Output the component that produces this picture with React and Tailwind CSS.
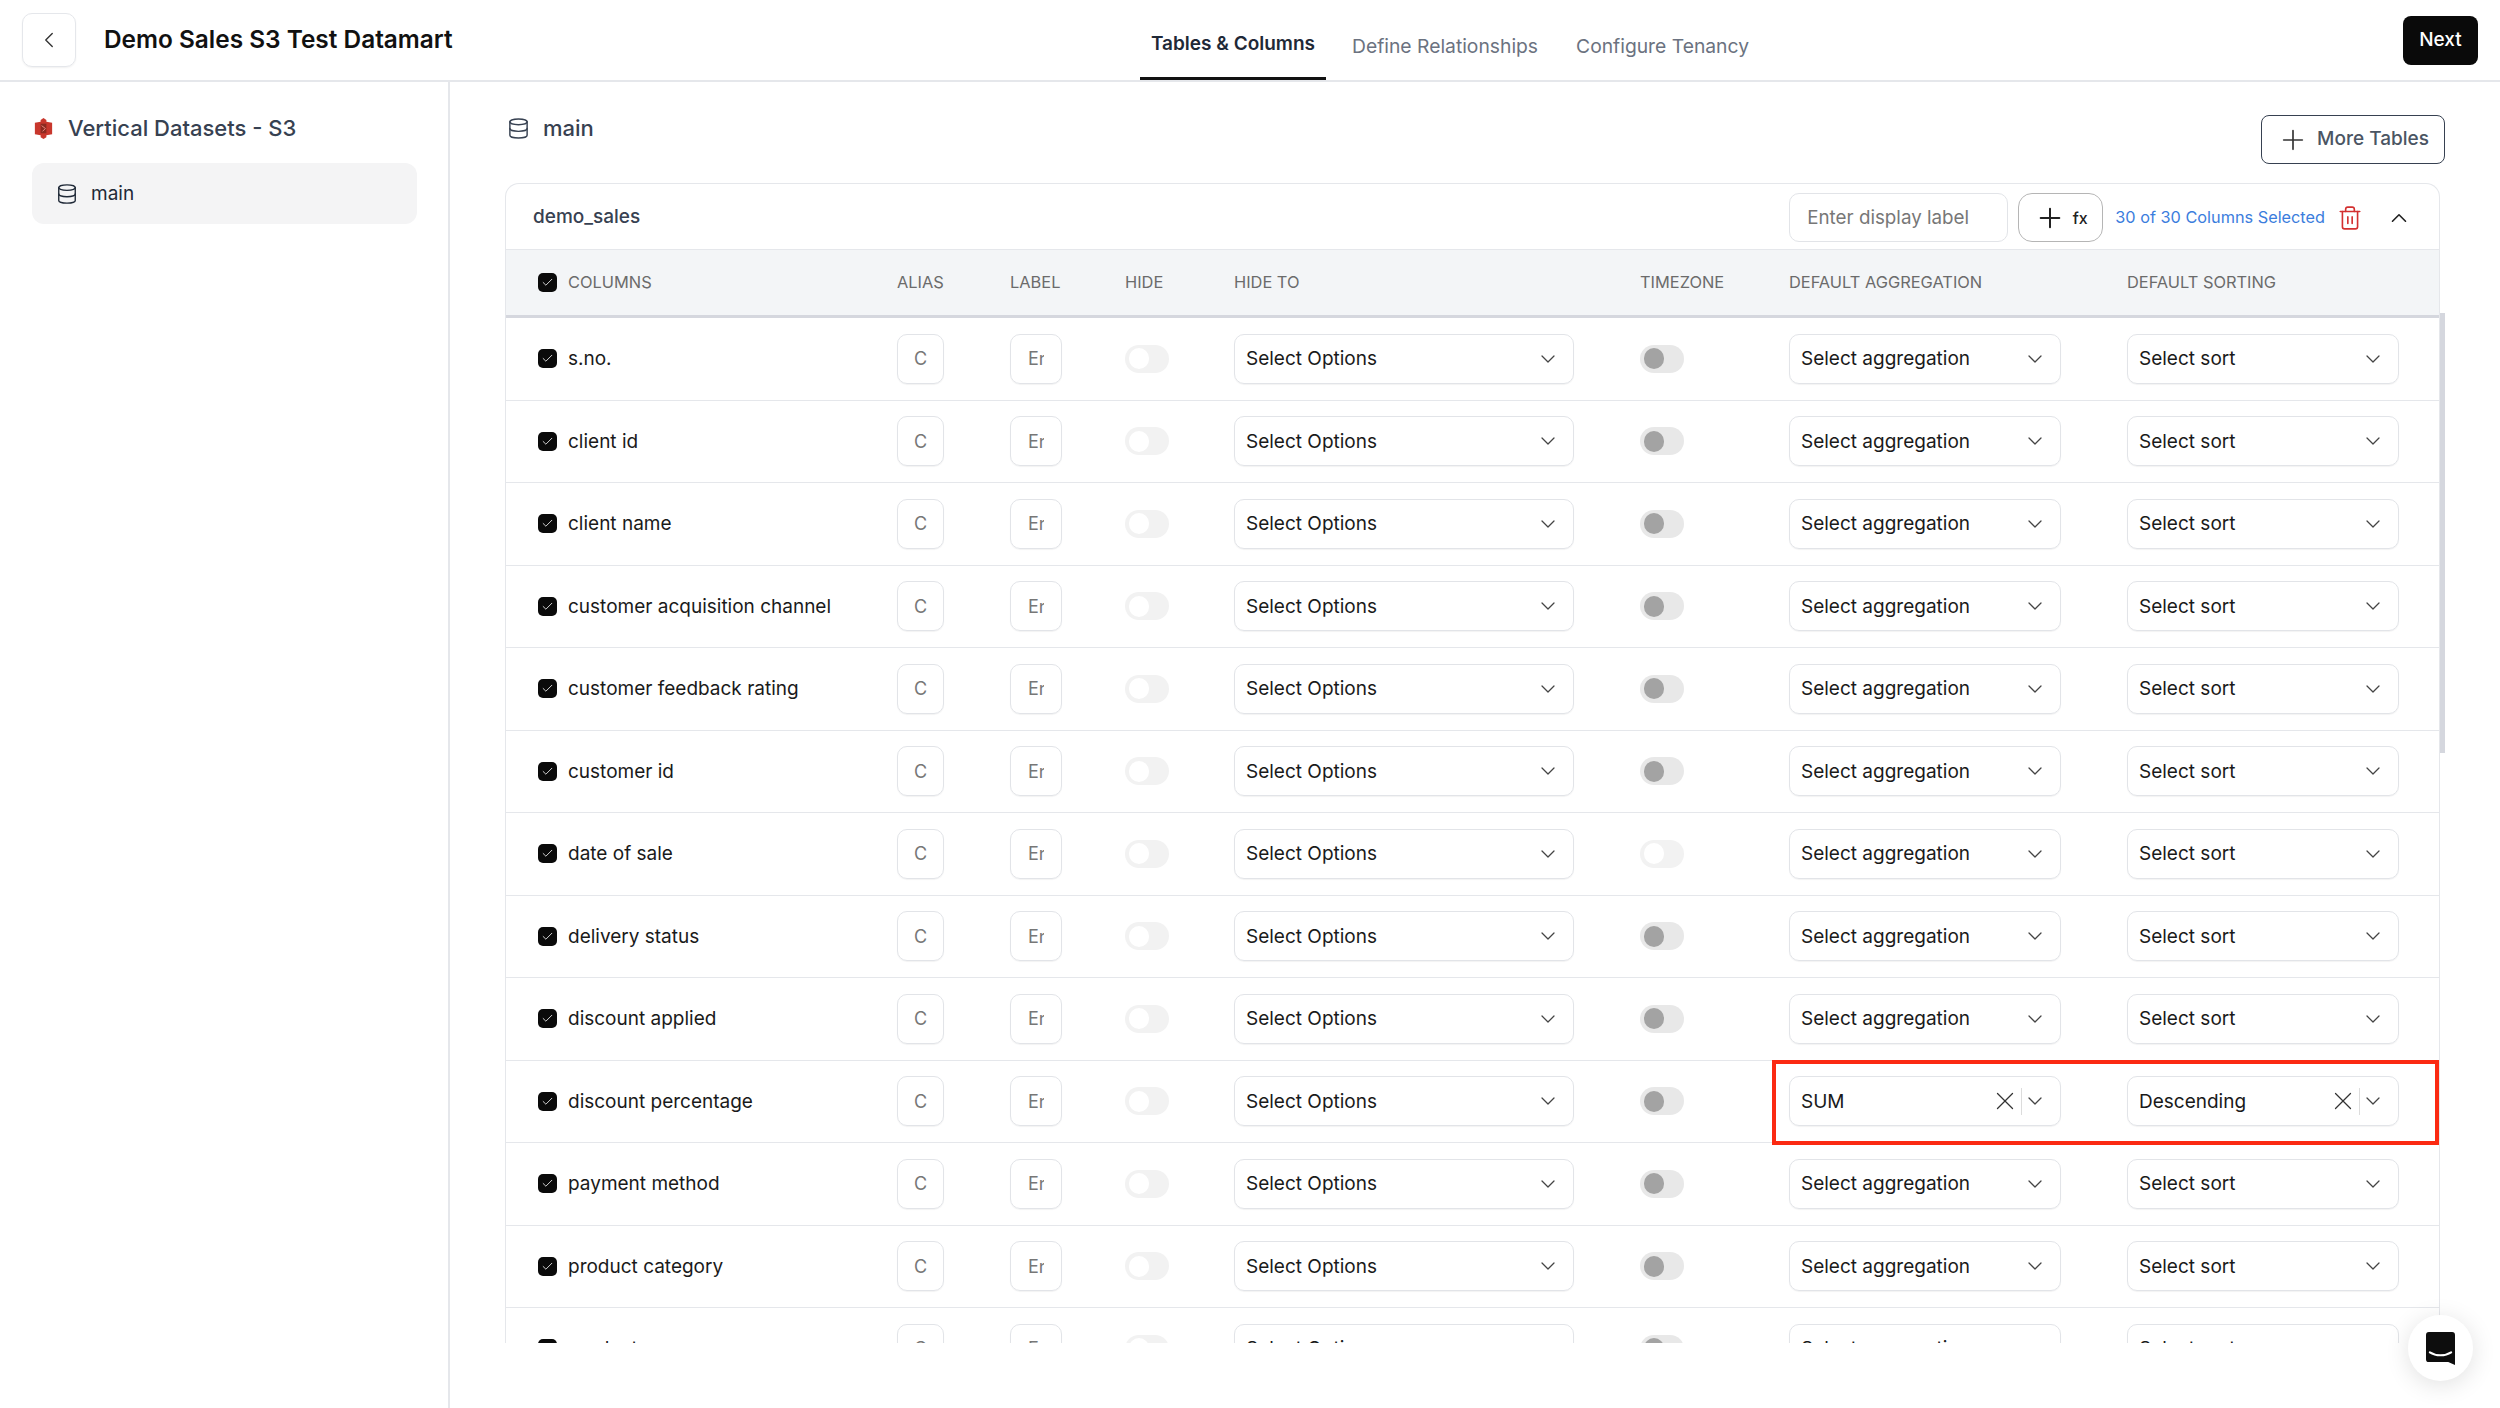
import { ChevronLeft, ChevronDown, ChevronUp, Database, Plus, Trash2, X, Check } from 'lucide-react'

const columns = [
  's.no.', 'client id', 'client name', 'customer acquisition channel', 'customer feedback rating',
  'customer id', 'date of sale', 'delivery status', 'discount applied', 'discount percentage',
  'payment method', 'product category', 'product',
]

const gridCols = 'grid grid-cols-[359px_113px_115px_109px_406px_149px_338px_1fr] pl-[32px]'

function Tick() {
  return (
    <span className="w-[19px] h-[19px] rounded-[5px] bg-[#0a0a0a] flex items-center justify-center flex-shrink-0">
      <Check className="w-[13px] h-[13px] text-white" strokeWidth={1.5} />
    </span>
  )
}

function Toggle({ grey }) {
  return (
    <span className={`w-[44px] h-[28px] rounded-full flex items-center pl-[4px] ${grey ? 'bg-[#e8e8e8]' : 'bg-[#f2f2f2]'}`}>
      <span className={`w-[20px] h-[21px] rounded-full ${grey ? 'bg-[#a3a3a3]' : 'bg-white'}`} />
    </span>
  )
}

function Picker({ text, clearable, className }) {
  return (
    <div className={`h-[50px] rounded-[10px] border border-[#e2e4e8] shadow-[0_1px_1px_rgba(0,0,0,0.05)] flex items-center pl-[11px] pr-[13px] text-[19px] text-[#1a1a1a] ${className}`}>
      <span className="flex-1 pt-[1px]">{text}</span>
      {clearable && <X className="w-[30px] h-[30px] text-[#333] mr-[1px]" strokeWidth={1} />}
      {clearable && <span className="w-px h-[27px] bg-[#dcdcdc] mr-[1px]" />}
      <ChevronDown className="w-[24px] h-[24px] text-[#444]" strokeWidth={1.25} />
    </div>
  )
}

function Row({ name, sum }) {
  return (
    <div className={`${gridCols} relative h-[82.5px] items-center border-b border-[#e5e7eb]`}>
      <div className="flex items-center gap-[11px] text-[19px] text-[#1a1a1a]">
        <Tick />
        <span className="pt-[1px]">{name}</span>
      </div>
      <input placeholder="C" className="w-[47px] h-[50px] rounded-[10px] border border-[#e2e4e8] shadow-[0_1px_1px_rgba(0,0,0,0.05)] text-center text-[18px] placeholder:text-[#777] outline-none" />
      <input placeholder="Enter" className="w-[52px] h-[50px] rounded-[10px] border border-[#e2e4e8] shadow-[0_1px_1px_rgba(0,0,0,0.05)] px-[17px] text-[18px] placeholder:text-[#777] outline-none" />
      <Toggle />
      <Picker text="Select Options" className="w-[340px]" />
      <Toggle grey={name !== 'date of sale'} />
      <Picker text={sum ? 'SUM' : 'Select aggregation'} clearable={sum} className="w-[272px]" />
      <Picker text={sum ? 'Descending' : 'Select sort'} clearable={sum} className="w-[272px]" />
      {sum && <div className="absolute left-[1266px] right-0 top-[-1px] h-[85px] border-4 border-[#fb2a12]" />}
    </div>
  )
}

export default function App() {
  return (
    <div className="h-screen overflow-hidden bg-white flex flex-col font-['Inter',sans-serif]">
      {/* Header */}
      <header className="h-[82px] border-b-2 border-[#e5e7eb] flex-shrink-0 flex items-center pl-[22px] pr-[22px]">
        <div className="w-[420px] flex items-center gap-[28px]">
          <button className="w-[54px] h-[54px] flex-shrink-0 rounded-[10px] border border-[#e5e7eb] shadow-[0_1px_2px_rgba(0,0,0,0.06)] flex items-center justify-center text-[#333]">
            <ChevronLeft className="w-[26px] h-[26px]" strokeWidth={1.25} />
          </button>
          <h1 className="text-[24.4px] font-semibold text-[#111] whitespace-nowrap mt-[-2px]">Demo Sales S3 Test Datamart</h1>
        </div>
        <nav className="ml-[698px] flex items-stretch h-full">
          <a className="w-[186px] flex items-center justify-center pt-[11px] border-b-[3px] border-[#111] text-[19px] font-semibold text-[#1f2937]">Tables &amp; Columns</a>
          <a className="ml-[26px] flex items-center pt-[12px] text-[19.3px] text-[#6b7280]">Define Relationships</a>
          <a className="ml-[38px] flex items-center pt-[12px] text-[19.3px] text-[#6b7280]">Configure Tenancy</a>
        </nav>
        <button className="ml-auto w-[75px] h-[49px] rounded-[8px] bg-[#0a0a0a] text-white text-[19px] font-medium">Next</button>
      </header>

      {/* Body */}
      <div className="flex flex-1 overflow-hidden">
        <aside className="w-[450px] border-r-2 border-[#e5e7eb] flex-shrink-0 pl-[32px] pr-[31px] pt-[31px]">
          <div className="flex items-center gap-[13px] h-[30px] text-[22px] font-medium text-[#374151]">
            <svg className="w-[23px] h-[23px] flex-shrink-0" viewBox="0 0 24 24">
              <path fill="#c8372d" d="M3 6l6-1V3l3-2 3 2v2l6 1v12l-6 1v2l-3 2-3-2v-2l-6-1z" />
              <path fill="#8c2a20" d="M9 7h6v10H9z" />
              <path fill="none" stroke="#e9897f" strokeWidth="1" d="M10 9l4 3-3 3" />
            </svg>
            Vertical Datasets - S3
          </div>
          <div className="mt-[20px] h-[61px] rounded-[12px] bg-[#f4f4f5] flex items-center gap-[13px] pl-[24px] text-[19px] text-[#1f2937]">
            <Database className="w-[22px] h-[22px]" strokeWidth={1.5} />
            <span className="pt-[2px]">main</span>
          </div>
        </aside>

        <main className="flex-1 pl-[55px] pr-[60px] relative">
          <div className="h-[101px] flex pt-[33px] justify-between">
            <div className="flex items-center gap-[13px] h-[26px] pl-[2px] text-[22px] font-medium text-[#374151]">
              <Database className="w-[23px] h-[23px]" strokeWidth={1.5} />
              main
            </div>
            <button className="mr-[-5px] w-[184px] h-[49px] rounded-[8px] border border-[#374151] flex items-center justify-center gap-[8px] text-[19px] font-medium text-[#4b5563]">
              <Plus className="w-[32px] h-[32px] text-[#333]" strokeWidth={1.25} />
              More Tables
            </button>
          </div>

          <div className="relative h-[1160px]">
            <div className="h-full rounded-t-[14px] border border-b-0 border-[#e5e7eb] overflow-hidden">
              <div className="h-[66px] flex items-center pl-[27px] pr-[27px] pt-[2px] border-b border-[#e5e7eb]">
                <span className="text-[19px] font-medium text-[#374151]">demo_sales</span>
                <input placeholder="Enter display label" className="ml-auto w-[219px] h-[49px] rounded-[10px] border border-[#e2e4e8] pl-[17px] text-[18.8px] placeholder:text-[#777] outline-none" />
                <button className="ml-[10px] w-[85px] h-[49px] rounded-[14px] border border-[#b5b5b5] flex items-center justify-center gap-[7px] text-[16px] font-medium text-[#222]">
                  <Plus className="w-[32px] h-[32px]" strokeWidth={1.5} />
                  fx
                </button>
                <span className="ml-[12px] text-[16.3px] text-[#3b7ddd] whitespace-nowrap">30 of 30 Columns Selected</span>
                <Trash2 className="ml-[12px] w-[26px] h-[26px] text-[#d32f2f]" strokeWidth={1.5} />
                <ChevronUp className="ml-[23px] w-[26px] h-[26px] text-[#222]" strokeWidth={1.5} />
              </div>

              <div className={`${gridCols} h-[68px] items-center bg-[#f3f5f7] border-b-[3px] border-[#d5d7de] text-[16.4px] text-[#6b6b6b]`}>
                <div className="flex items-center gap-[11px]"><Tick />COLUMNS</div>
                <div>ALIAS</div>
                <div>LABEL</div>
                <div>HIDE</div>
                <div>HIDE TO</div>
                <div>TIMEZONE</div>
                <div>DEFAULT AGGREGATION</div>
                <div>DEFAULT SORTING</div>
              </div>

              {columns.map(c => <Row key={c} name={c} sum={c === 'discount percentage'} />)}
            </div>

            {/* scrollbar thumb */}
            <div className="absolute right-[-5px] top-[130px] w-[5px] h-[440px] bg-[#d5d7de]" />
          </div>

          <button className="absolute right-[27px] bottom-[27px] w-[65px] h-[66px] rounded-full bg-white shadow-[0_4px_24px_rgba(0,0,0,0.12)] flex items-center justify-center">
            <svg className="w-[29px] h-[33px]" viewBox="0 0 30 34">
              <path fill="#0d0d0d" d="M3 0h24a3 3 0 013 3v31l-7-3H3a3 3 0 01-3-3V3a3 3 0 013-3z" />
              <path fill="none" stroke="#fff" strokeWidth="2.2" strokeLinecap="round" d="M4 21c6 4 16 4 22 0" />
            </svg>
          </button>
        </main>
      </div>
    </div>
  )
}
